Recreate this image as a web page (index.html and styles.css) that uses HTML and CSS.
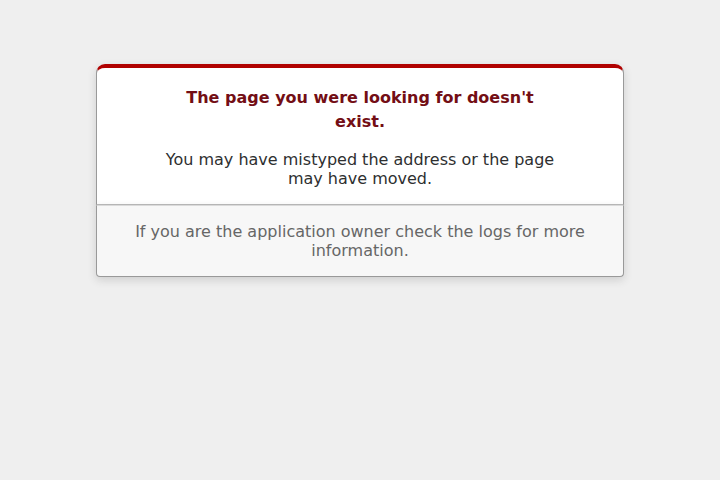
FILE: index.html
```html
<!DOCTYPE html>
<html lang="en">
<head>
<meta charset="utf-8">
<title>The page you were looking for doesn't exist (404)</title>
<link rel="stylesheet" href="styles.css">
</head>
<body class="error-page">
  <div class="dialog">
    <div class="dialog-main">
      <h1 class="title">The page you were looking for doesn't exist.</h1>
      <p class="message">You may have mistyped the address or the page may have moved.</p>
    </div>
    <p class="footer-note">If you are the application owner check the logs for more information.</p>
  </div>
</body>
</html>
```

FILE: styles.css
```css
.error-page {
  background-color: #EFEFEF;
  color: #2E2F30;
  text-align: center;
  font-family: "DejaVu Sans", sans-serif;
  font-size: 16px;
  margin: 0;
}

.dialog {
  width: 95%;
  max-width: 33em;
  margin: 4em auto 0;
}

.dialog-main {
  border: 1px solid #CCC;
  border-right-color: #999;
  border-left-color: #999;
  border-bottom-color: #BBB;
  border-top: #B00100 solid 4px;
  border-top-left-radius: 9px;
  border-top-right-radius: 9px;
  background-color: white;
  padding: 7px 12% 0;
  box-shadow: 0 3px 8px rgba(50, 50, 50, 0.17);
}

.title {
  font-size: 100%;
  color: #730E15;
  line-height: 1.5em;
}

.message {
  margin: 1em 0;
}

.footer-note {
  margin: 0 0 1em;
  padding: 1em;
  background-color: #F7F7F7;
  border: 1px solid #CCC;
  border-right-color: #999;
  border-left-color: #999;
  border-bottom-color: #999;
  border-bottom-left-radius: 4px;
  border-bottom-right-radius: 4px;
  border-top-color: #DADADA;
  color: #666;
  box-shadow: 0 3px 8px rgba(50, 50, 50, 0.17);
}
```
